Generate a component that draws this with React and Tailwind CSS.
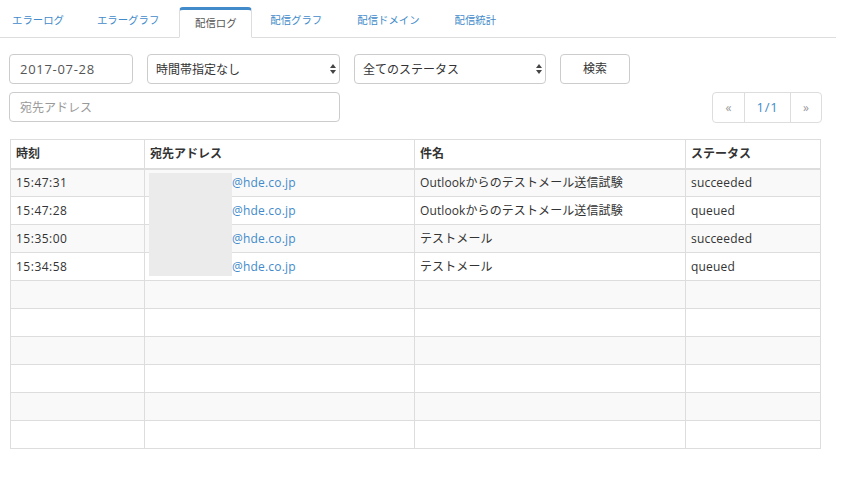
import React from "react";

const FONT = { fontFamily: '"Open Sans", "Noto Sans CJK JP", sans-serif' };

const TABS = [
  { label: "エラーログ", cls: "pl-[12px] pr-[15px] mr-[3px]" },
  { label: "エラーグラフ", cls: "px-[15px] mr-[5px]" },
  { label: "配信ログ", active: true },
  { label: "配信グラフ", cls: "px-[15px] mr-[5px]" },
  { label: "配信ドメイン", cls: "px-[15px] mr-[5px]" },
  { label: "配信統計", cls: "px-[15px]" },
];

const ROWS = [
  { time: "15:47:31", subject: "Outlookからのテストメール送信試験", status: "succeeded" },
  { time: "15:47:28", subject: "Outlookからのテストメール送信試験", status: "queued" },
  { time: "15:35:00", subject: "テストメール", status: "succeeded" },
  { time: "15:34:58", subject: "テストメール", status: "queued" },
  {}, {}, {}, {}, {}, {},
];

function Tabs() {
  return (
    <ul className="flex h-[38px] w-[836px] border-b border-[#ddd] text-[10.4px]">
      {TABS.map((t) =>
        t.active ? (
          <li key={t.label} className="mt-[7px] mr-[3px] flex h-[31px] w-[73px] items-center justify-center rounded-t-[4px] border-x border-b border-x-[#ddd] border-b-white border-t-[3px] border-t-[#428bca] bg-white text-[#555] whitespace-nowrap">
            {t.label}
          </li>
        ) : (
          <li key={t.label} className={`flex h-[37px] items-center pt-[4px] text-[#428bca] whitespace-nowrap ${t.cls}`}>{t.label}</li>
        )
      )}
    </ul>
  );
}

function Select({ label, className }) {
  return (
    <div className={`relative h-[30px] ${className}`}>
      <select className="h-full w-full appearance-none rounded-[4px] border border-[#ccc] bg-white pl-[8px] pt-[2px] text-[12px] text-[#333]">
        <option>{label}</option>
      </select>
      <svg className="absolute right-[4px] top-[10px] pointer-events-none" width="6" height="10" viewBox="0 0 6 10" fill="#444">
        <path d="M3 0 L6 4 H0 Z" />
        <path d="M0 6 H6 L3 10 Z" />
      </svg>
    </div>
  );
}

function Filters() {
  return (
    <div className="mt-[16px] pl-[9px] pr-[22px]">
      <div className="flex gap-[14px]">
        <input readOnly value="2017-07-28" className="h-[30px] w-[124px] rounded-[4px] border border-[#ccc] px-[10px] text-[13px] tracking-[0.7px] text-[#555]" />
        <Select label="時間帯指定なし" className="w-[193px]" />
        <Select label="全てのステータス" className="w-[192px]" />
        <button className="h-[30px] w-[70px] rounded-[4px] border border-[#ccc] bg-white text-[12px] text-[#333]">検索</button>
      </div>
      <div className="mt-[8px] flex justify-between">
        <input readOnly placeholder="宛先アドレス" className="h-[30px] w-[331px] rounded-[4px] border border-[#ccc] px-[10px] text-[12px] placeholder:text-[#999]" />
        <div className="flex h-[31px] w-[110px] rounded-[4px] border border-[#ddd] text-[12px]">
          <span className="flex w-[31px] items-center justify-center text-[#999]">«</span>
          <span className="flex w-[47px] items-center justify-center border-x border-[#ddd] text-[13px] tracking-[0.8px] text-[#428bca]">1/1</span>
          <span className="flex flex-1 items-center justify-center text-[#999]">»</span>
        </div>
      </div>
    </div>
  );
}

function LogTable() {
  const cell = "h-[28px] border border-[#ddd] px-[5px] py-0 text-[12px] text-[#333] whitespace-nowrap";
  return (
    <div className="relative ml-[10px] mt-[16px] w-[811px]">
      <table className="w-full table-fixed border-collapse">
        <colgroup>
          <col className="w-[134px]" />
          <col className="w-[270px]" />
          <col className="w-[271px]" />
          <col />
        </colgroup>
        <thead>
          <tr>
            {["時刻", "宛先アドレス", "件名", "ステータス"].map((h) => (
              <th key={h} className="h-[29px] border border-b-2 border-[#ddd] px-[5px] py-0 text-left text-[12px] font-bold text-[#333]">{h}</th>
            ))}
          </tr>
        </thead>
        <tbody>
          {ROWS.map((r, i) => (
            <tr key={i} className={i % 2 === 0 ? "bg-[#f9f9f9]" : "bg-white"}>
              <td className={`${cell} tracking-[0.5px]`}>{r.time}</td>
              <td className={`${cell} tracking-[0.2px]`}>
                {r.time && <span className="block pl-[82px] text-[#428bca]">@hde.co.jp</span>}
              </td>
              <td className={`${cell} tracking-[0.1px]`}>{r.subject}</td>
              <td className={`${cell} tracking-[0.2px]`}>{r.status}</td>
            </tr>
          ))}
        </tbody>
      </table>
      {/* redacted addresses */}
      <div className="absolute left-[139px] top-[34px] h-[103px] w-[83px] bg-[#ebebeb]" />
    </div>
  );
}

export default function App() {
  return (
    <div className="h-[484px] w-[844px] overflow-hidden bg-white" style={FONT}>
      <Tabs />
      <Filters />
      <LogTable />
    </div>
  );
}
